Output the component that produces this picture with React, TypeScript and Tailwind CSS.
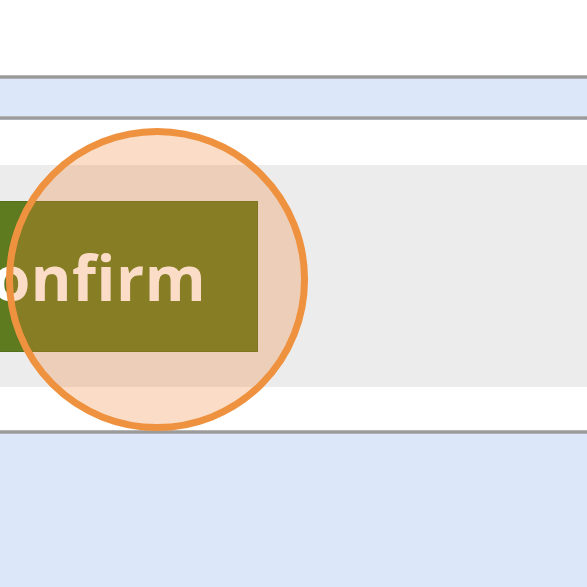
import React from 'react';

function Rule() {
  return <div className="h-[4px] bg-gradient-to-b from-[#c2c2c2] via-[#8e8e8e] to-[#b9bcc2]" />;
}

export default function App() {
  return (
    <div className="relative h-[587px] w-[587px] overflow-hidden bg-[#dde7fa] font-['Open_Sans',sans-serif]">
      <div className="h-[75px] bg-white" />
      <Rule />
      <div className="h-[37px] bg-[#dde7fa]" />
      <Rule />
      <div className="bg-white pt-[45px] pb-[43px]">
        <div className="flex h-[222px] items-center bg-[#ececec]">
          <button
            type="button"
            className="ml-[-100px] h-[151px] w-[358px] shrink-0 border border-[#55701a] bg-[#5e7b1f] pt-[2px] text-center text-[62px] font-bold tracking-[0.5px] text-white"
          >
            Confirm
          </button>
        </div>
      </div>
      <Rule />

      {/* highlight ring over the button */}
      <div className="pointer-events-none absolute left-[6px] top-[128px] h-[303px] w-[302px] rounded-full border-[7px] border-[#ef9240] bg-[rgba(240,132,55,0.28)]" />
    </div>
  );
}
